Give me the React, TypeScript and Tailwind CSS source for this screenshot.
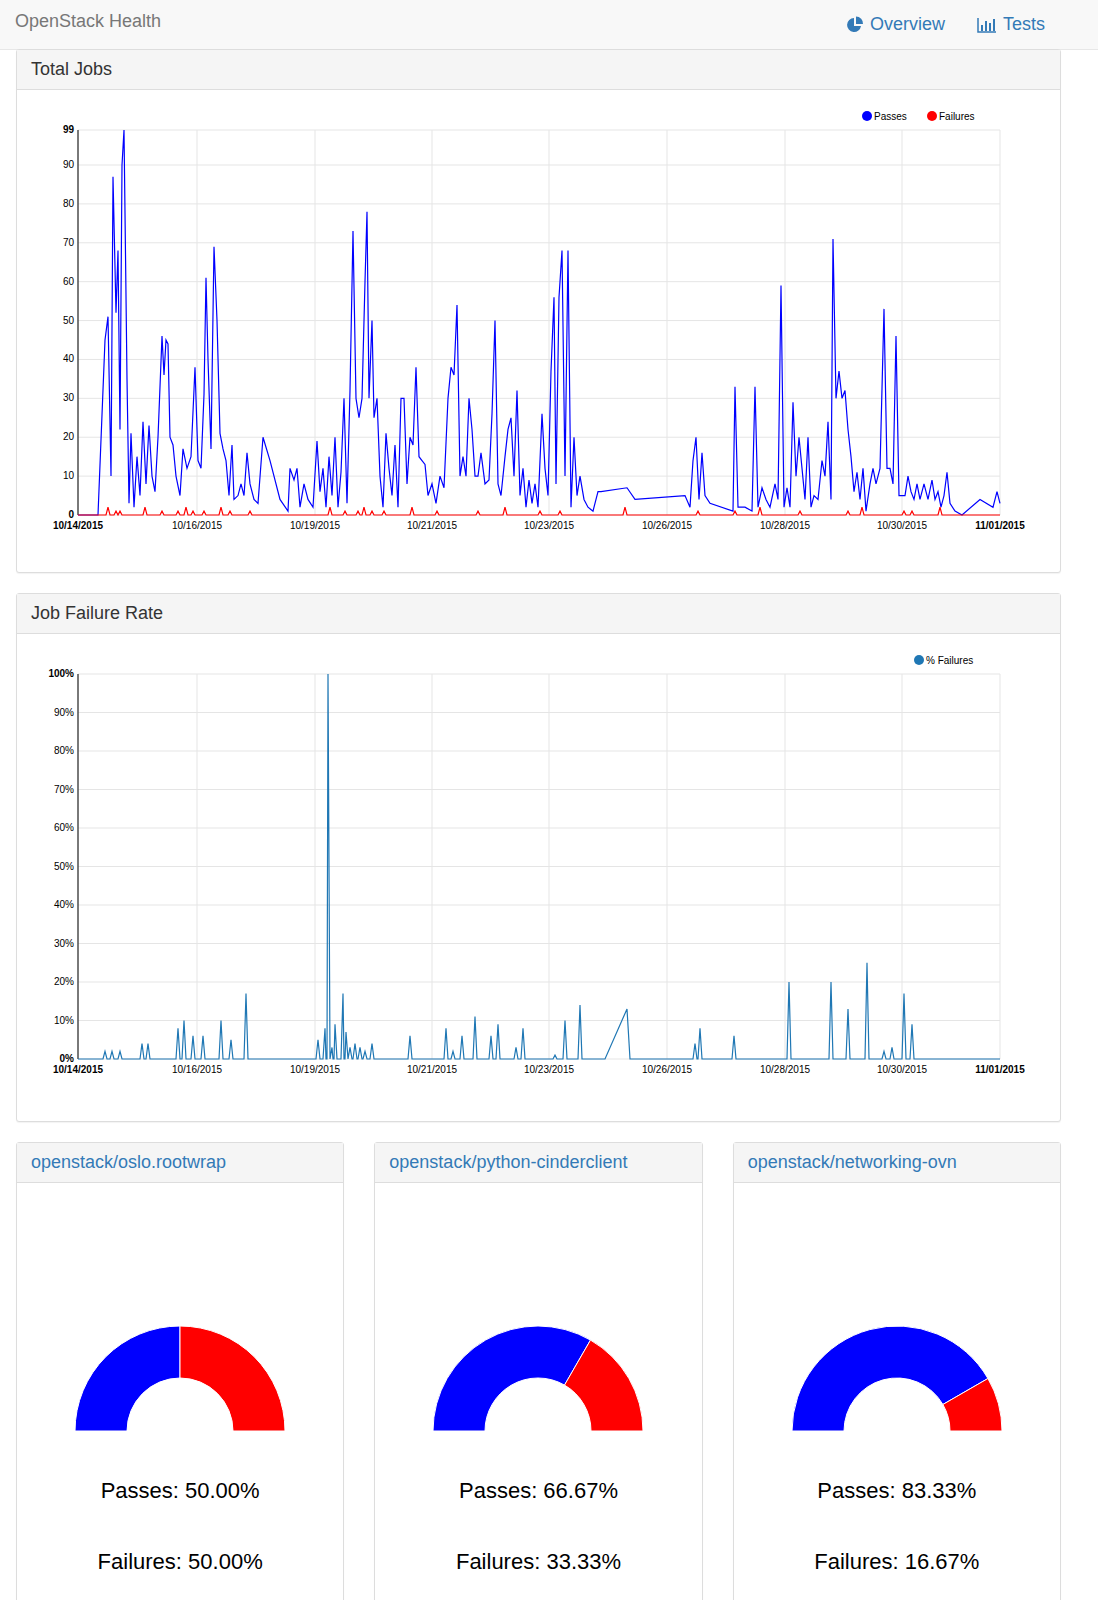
import React from 'react';

const font = { fontFamily: '"Liberation Sans", Arial, sans-serif' };

// screen-x, value
const passes: [number, number][] = [[78,0],[98,0],[105,45],[108,51],[111,10],[113,87],[116,52],[118,68],[120,22],[122,90],[124,99],[127,35],[129,3],[131,21],[134,2],[137,15],[140,5],[143,24],[146,8],[149,23],[152,10],[155,6],[158,20],[162,46],[164,36],[166,45],[168,44],[170,20],[173,18],[176,10],[180,5],[183,17],[187,12],[191,15],[195,38],[198,14],[201,12],[204,31],[206,61],[208,40],[211,17],[214,69],[217,50],[220,21],[223,17],[226,14],[229,5],[232,18],[234,4],[238,5],[241,8],[244,5],[247,16],[250,8],[254,4],[258,3],[263,20],[270,14],[280,4],[288,1],[290,12],[294,9],[297,12],[300,2],[304,8],[308,4],[313,2],[317,19],[320,6],[323,12],[326,2],[329,15],[332,5],[335,20],[338,2],[341,11],[344,30],[347,3],[350,32],[353,73],[356,30],[359,25],[362,30],[365,60],[367,78],[369,30],[372,50],[374,25],[377,30],[380,10],[383,2],[386,21],[389,12],[392,5],[395,18],[398,2],[401,30],[404,30],[407,8],[410,20],[413,18],[416,38],[419,15],[422,14],[425,13],[428,5],[432,8],[436,3],[440,10],[444,7],[448,30],[451,38],[454,36],[457,54],[460,10],[463,15],[466,10],[469,30],[472,22],[475,10],[478,10],[481,16],[485,8],[489,9],[492,26],[495,50],[498,8],[501,5],[505,15],[508,22],[511,25],[514,10],[517,32],[520,5],[523,12],[526,2],[529,9],[532,3],[535,8],[538,2],[542,26],[545,12],[548,5],[551,37],[554,56],[556,8],[559,56],[562,68],[565,10],[568,68],[571,2],[574,20],[577,5],[580,10],[584,4],[588,2],[593,1],[598,6],[601,6],[627,7],[635,4],[685,5],[690,2],[693,14],[696,20],[699,4],[702,16],[705,5],[710,3],[733,1],[735,33],[738,2],[745,2],[752,1],[755,33],[758,2],[762,7],[766,4],[770,2],[775,8],[778,4],[781,59],[784,2],[787,7],[790,2],[793,29],[796,10],[799,20],[802,12],[805,4],[808,20],[811,2],[814,5],[818,4],[822,14],[825,10],[828,24],[831,4],[833,71],[836,30],[839,37],[842,30],[845,32],[848,22],[851,15],[854,6],[857,11],[860,4],[863,12],[866,1],[870,8],[873,12],[876,8],[880,12],[884,53],[887,12],[890,12],[893,8],[896,46],[899,5],[902,5],[905,5],[908,10],[911,6],[914,4],[917,8],[920,4],[924,8],[928,4],[932,9],[935,4],[938,6],[941,2],[944,5],[947,11],[950,3],[955,1],[962,0],[980,4],[993,2],[997,6],[1000,3]];

const failBumps = [108,116,120,145,162,178,186,193,204,221,230,250,330,345,358,364,372,384,412,437,478,505,540,560,625,698,735,760,800,848,862,904,912,940];
const failures: [number, number][] = [[78, 0]];
failBumps.forEach((x, i) => { failures.push([x - 2, 0], [x, i % 3 === 0 ? 2 : 1], [x + 2, 0]); });
failures.push([1000, 0]);

const rateSpikes: [number, number][] = [[105,2],[112,2],[120,2],[142,4],[148,4],[178,8],[184,10],[193,6],[203,6],[221,10],[231,5],[246,17],[318,5],[325,8],[328,100],[332,3],[335,9],[343,17],[346,7],[350,3],[355,4],[360,3],[365,2],[372,4],[410,6],[446,8],[453,2],[462,6],[475,11],[491,6],[498,9],[516,3],[523,8],[555,1],[565,10],[580,14],[695,4],[700,8],[734,6],[789,20],[831,20],[848,13],[867,25],[884,2],[892,3],[904,17],[912,9]];
const rate: [number, number][] = [[78, 0]];
rateSpikes.forEach(([x, v]) => { rate.push([x - 2, 0], [x, v], [x + 2, 0]); });
rate.push([605, 0], [627, 13], [630, 0]);
rate.sort((a, b) => a[0] - b[0]);
rate.push([1000, 0]);

const ticks = [[78, '10/14/2015'], [197, '10/16/2015'], [315, '10/19/2015'], [432, '10/21/2015'], [549, '10/23/2015'], [667, '10/26/2015'], [785, '10/28/2015'], [902, '10/30/2015'], [1000, '11/01/2015']] as const;

function Chart({ top, bottom, max, yTicks, series, legend }: {
  top: number; bottom: number; max: number;
  yTicks: { v: number; label: string; bold?: boolean }[];
  series: { pts: [number, number][]; color: string }[];
  legend: { label: string; color: string; x: number }[];
}) {
  // svg origin at screen (17, top-40)
  const ox = 17, oy = top - 40;
  const y = (v: number) => bottom - (v / max) * (bottom - top) - oy;
  return (
    <svg width="1042" height="486" className="block">
      {ticks.map(([x]) => <line key={x} x1={x - ox} x2={x - ox} y1={top - oy} y2={bottom - oy} stroke="#e5e5e5" />)}
      {yTicks.map(t => <line key={t.v} x1={78 - ox} x2={1000 - ox} y1={y(t.v)} y2={y(t.v)} stroke="#e5e5e5" />)}
      <line x1={78 - ox} x2={78 - ox} y1={top - oy} y2={bottom - oy} stroke="#000" />
      {yTicks.map(t => <text key={t.v} x={74 - ox} y={y(t.v) + 3} fontSize="10" textAnchor="end" fontWeight={t.bold ? 'bold' : 'normal'} fill="#000" style={font}>{t.label}</text>)}
      {ticks.map(([x, l], i) => <text key={l} x={x - ox} y={bottom - oy + 14} fontSize="10" textAnchor="middle" fontWeight={i === 0 || i === 8 ? 'bold' : 'normal'} fill="#000" style={font}>{l}</text>)}
      {series.map(s => <polyline key={s.color} fill="none" stroke={s.color} strokeWidth="1.2" points={s.pts.map(([x, v]) => `${x - ox},${y(v)}`).join(' ')} />)}
      {legend.map(l => (
        <g key={l.label}>
          <circle cx={l.x - ox} cy={top - oy - 14} r="5" fill={l.color} />
          <text x={l.x - ox + 7} y={top - oy - 10} fontSize="10" fill="#000" style={font}>{l.label}</text>
        </g>
      ))}
    </svg>
  );
}

function Gauge({ p }: { p: number }) {
  const cx = 105, cy = 106, R = 105, r = 53;
  const a = Math.PI * (1 - p);
  const ox = cx + R * Math.cos(a), oy = cy - R * Math.sin(a);
  const ix = cx + r * Math.cos(a), iy = cy - r * Math.sin(a);
  const blue = `M0 ${cy} A${R} ${R} 0 0 1 ${ox} ${oy} L${ix} ${iy} A${r} ${r} 0 0 0 ${cx - r} ${cy} Z`;
  const red = `M${ox} ${oy} A${R} ${R} 0 0 1 ${cx + R} ${cy} L${cx + r} ${cy} A${r} ${r} 0 0 0 ${ix} ${iy} Z`;
  return (
    <svg width="210" height="107">
      <path d={blue} fill="#0000ff" stroke="#fff" strokeWidth="1" />
      <path d={red} fill="#ff0000" stroke="#fff" strokeWidth="1" />
    </svg>
  );
}

function Panel({ title, link, children, className }: { title: string; link?: boolean; children: React.ReactNode; className?: string }) {
  return (
    <div className={`border border-[#dddddd] rounded-[3px] bg-white shadow-[0_1px_1px_rgba(0,0,0,0.05)] ${className ?? ''}`}>
      <div className={`h-[40px] px-[14px] flex items-center bg-[#f5f5f5] border-b border-[#dddddd] text-[18px] ${link ? 'text-[#337ab7]' : 'text-[#333]'}`}>{title}</div>
      {children}
    </div>
  );
}

const projects = [
  { name: 'openstack/oslo.rootwrap', p: 0.5, pass: '50.00%', fail: '50.00%' },
  { name: 'openstack/python-cinderclient', p: 0.6667, pass: '66.67%', fail: '33.33%' },
  { name: 'openstack/networking-ovn', p: 0.8333, pass: '83.33%', fail: '16.67%' },
];

export default function App() {
  return (
    <div className="w-[1098px] h-[1600px] overflow-hidden bg-white" style={font}>
      <div className="h-[50px] bg-[#f8f8f8] border-b border-[#e7e7e7] flex items-center justify-between px-[15px]">
        <span className="text-[18px] text-[#777] -mt-[6px]">OpenStack Health</span>
        <div className="flex items-center gap-[32px] text-[18px] text-[#337ab7] pr-[38px]">
          <span className="flex items-center gap-[6px]">
            <svg width="18" height="18" viewBox="0 0 18 18"><path d="M8 2 A7 7 0 1 0 15 10 L8 10 Z" fill="#337ab7" /><path d="M10 0.5 A7 7 0 0 1 17 8 L10 8 Z" fill="#337ab7" /></svg>
            Overview
          </span>
          <span className="flex items-center gap-[6px]">
            <svg width="20" height="16" viewBox="0 0 20 16"><path d="M1 1 V15 H19" stroke="#337ab7" strokeWidth="1.5" fill="none" /><rect x="4" y="8" width="2" height="6" fill="#337ab7" /><rect x="8" y="4" width="2" height="10" fill="#337ab7" /><rect x="12" y="6" width="2" height="8" fill="#337ab7" /><rect x="16" y="2" width="2" height="12" fill="#337ab7" /></svg>
            Tests
          </span>
        </div>
      </div>
      <div className="w-[1045px] ml-[16px] flex flex-col">
        <Panel title="Total Jobs" className="h-[524px] -mt-px">
          <Chart top={127} bottom={512} max={99}
            yTicks={[{ v: 0, label: '0', bold: true }, ...[10, 20, 30, 40, 50, 60, 70, 80, 90].map(v => ({ v, label: String(v) })), { v: 99, label: '99', bold: true }]}
            series={[{ pts: passes, color: '#0000ff' }, { pts: failures, color: '#ff0000' }]}
            legend={[{ label: 'Passes', color: '#0000ff', x: 867 }, { label: 'Failures', color: '#ff0000', x: 932 }]} />
        </Panel>
        <Panel title="Job Failure Rate" className="h-[529px] mt-[20px]">
          <Chart top={676} bottom={1061} max={100}
            yTicks={[0, 10, 20, 30, 40, 50, 60, 70, 80, 90, 100].map(v => ({ v, label: `${v}%`, bold: v === 0 || v === 100 }))}
            series={[{ pts: rate, color: '#1f77b4' }]}
            legend={[{ label: '% Failures', color: '#1f77b4', x: 919 }]} />
        </Panel>
        <div className="grid grid-cols-3 gap-[30px] mt-[20px]">
          {projects.map(pr => (
            <Panel key={pr.name} title={pr.name} link className="h-[480px]">
              <div className="flex flex-col items-center pt-[142px]">
                <Gauge p={pr.p} />
                <div className="text-[22px] text-black mt-[42px]">Passes: {pr.pass}</div>
                <div className="text-[22px] text-black mt-[38px]">Failures: {pr.fail}</div>
              </div>
            </Panel>
          ))}
        </div>
      </div>
    </div>
  );
}
